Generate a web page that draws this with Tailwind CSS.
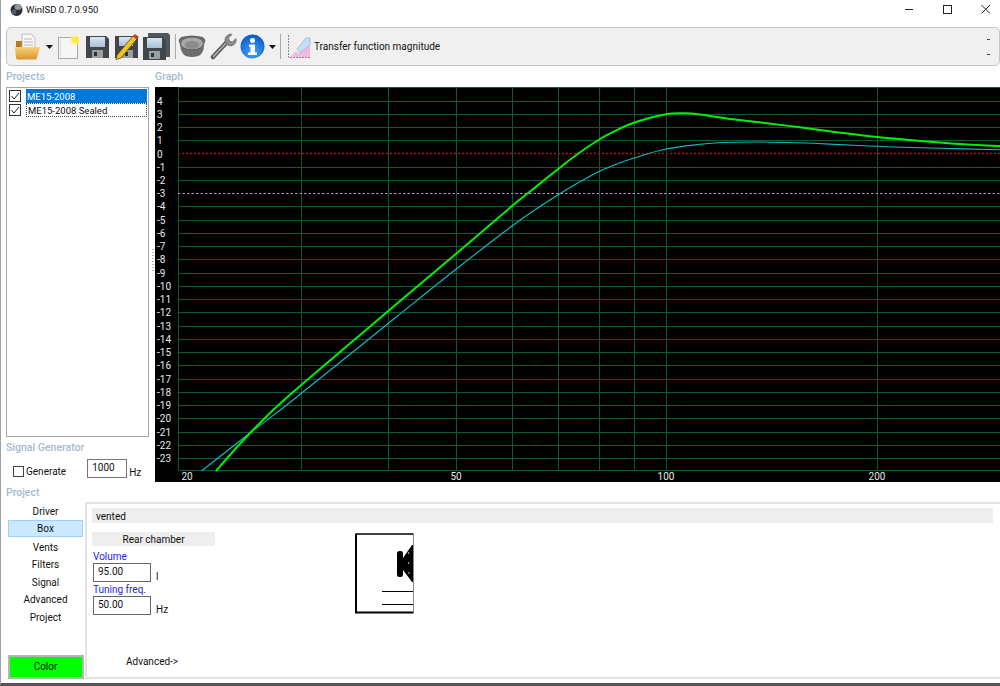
<!DOCTYPE html>
<html lang="en">

<head>
  <meta charset="UTF-8" />
  <title>WinISD 0.7.0.950</title>
  <script src="https://cdn.jsdelivr.net/npm/@tailwindcss/browser@4"></script>
</head>

<body class="bg-white">
  <div class="w-[1000px] h-[686px] overflow-hidden flex flex-col bg-white border-l border-l-gray-400 border-b-[3px] border-b-[#555] font-['Roboto',sans-serif] text-[10px] leading-[14px] text-[#111]">

    <!-- Title bar -->
    <div class="h-[27px] shrink-0 flex items-start">
      <svg class="ml-[8px] mt-[2px]" width="15" height="15" viewBox="0 0 15 15">
        <circle cx="7.5" cy="8" r="6" fill="#2b3036" />
        <ellipse cx="9" cy="5" rx="3.5" ry="3" fill="#8e979e" />
        <circle cx="5" cy="10" r="2.4" fill="#56606a" />
      </svg>
      <span class="ml-[2px] mt-[3px] text-[9.5px]">WinISD 0.7.0.950</span>
      <div class="ml-auto flex items-start">
        <svg width="100" height="20" viewBox="900 0 100 20" fill="none" stroke="#222" stroke-width="1">
          <path d="M905 9.5h8" />
          <rect x="943.5" y="5.5" width="8" height="8" />
          <path d="M981.5 5l8.500 8.500M990 5l-8.500 8.500" />
        </svg>
      </div>
    </div>

    <!-- Toolbar -->
    <div class="h-[39px] shrink-0 ml-[5px] flex items-center bg-[#f0f0f0] border border-[#c4c4c4] rounded-[5px] relative">
      <!-- open -->
      <svg class="ml-[7px]" width="27" height="28" viewBox="0 0 27 28">
        <defs>
          <linearGradient id="fold" x1="0" y1="0" x2="0" y2="1">
            <stop offset="0" stop-color="#f7d27a" />
            <stop offset="1" stop-color="#d9952a" />
          </linearGradient>
        </defs>
        <path d="M2 8h6l2 3h8v14H2z" fill="#b77a20" />
        <path d="M8 1h9l4 4v13H8z" fill="#f7f7f7" stroke="#a8a8a8" stroke-width=".7" />
        <path d="M10 6h8M10 9h9M10 12h9" stroke="#b8b8b8" stroke-width="1" />
        <path d="M1 14h25l-3 11q-.5 1.500-2 1.500H4q-1.500 0-2-1.500z" fill="url(#fold)" />
      </svg>
      <svg class="ml-[5px]" width="7" height="4" viewBox="0 0 7 4"><path d="M0 0h7L3.500 4z" fill="#111" /></svg>
      <!-- new -->
      <svg class="ml-[4px]" width="24" height="26" viewBox="0 0 24 26">
        <rect x="1.500" y="3.500" width="19" height="21" fill="#f6f6f4" stroke="#a9a9a9" />
        <path d="M3.500 5v18" stroke="#dcdcdc" />
        <circle cx="18" cy="6" r="5.500" fill="#fff27a" opacity=".55" />
        <circle cx="18" cy="6" r="3" fill="#ffe93c" />
      </svg>
      <!-- save -->
      <svg class="ml-[4px]" width="25" height="26" viewBox="0 0 25 26">
        <defs>
          <linearGradient id="disk" x1="0" y1="0" x2="0" y2="1">
            <stop offset="0" stop-color="#d9e6f2" />
            <stop offset="1" stop-color="#a9c0d6" />
          </linearGradient>
        </defs>
        <path d="M1 2h20l3 3v19H1z" fill="#3f464c" />
        <rect x="5" y="3" width="15" height="10" fill="url(#disk)" />
        <rect x="7" y="16" width="11" height="8" fill="#9a9fa3" />
        <rect x="9" y="18" width="3" height="4" fill="#2d3236" />
      </svg>
      <!-- save as -->
      <svg class="ml-[3px]" width="26" height="27" viewBox="0 0 26 27">
        <path d="M2 3h21l2 2v20H2z" fill="#3f464c" />
        <rect x="6" y="4" width="14" height="9" fill="url(#disk)" />
        <rect x="9" y="17" width="11" height="8" fill="#9a9fa3" />
        <rect x="12" y="19" width="3" height="4" fill="#2d3236" />
        <path d="M4 22L20 3l4 3L8 25l-5 1.500z" fill="#f2c21f" stroke="#4a3a10" stroke-width=".7" />
        <path d="M20 3l2-2 4 3-2 2z" fill="#d8362b" />
      </svg>
      <!-- save all -->
      <svg class="ml-[4px]" width="27" height="28" viewBox="0 0 27 28">
        <path d="M5 0h20l2 2v22H5z" fill="#50585e" />
        <path d="M0 4h20l3 3v20H0z" fill="#3f464c" />
        <rect x="4" y="5" width="15" height="10" fill="url(#disk)" />
        <rect x="6" y="18" width="11" height="8" fill="#9a9fa3" />
        <rect x="8" y="20" width="3" height="4" fill="#2d3236" />
      </svg>
      <div class="ml-[5px] w-px h-[25px] bg-[#a8a8a8]"></div>
      <!-- speaker -->
      <svg class="ml-[2px]" width="28" height="24" viewBox="0 0 28 24">
        <path d="M3 2q11-3 22 0l2.500 3-1.500 5q0 9-6 11-6 2-12 0-5-2-6-11L.5 5z" fill="#6d6d6d" />
        <ellipse cx="14" cy="8.500" rx="11.500" ry="6.500" fill="#a8a8a8" stroke="#5c5c5c" />
        <ellipse cx="14" cy="10" rx="7.500" ry="4" fill="#8c8c8c" />
      </svg>
      <!-- wrench -->
      <svg class="ml-[4px]" width="27" height="27" viewBox="0 0 27 27">
        <path d="M3 24L17 9" stroke="#5d5d5d" stroke-width="4.500" stroke-linecap="round" />
        <path d="M3.500 23.500L17 9" stroke="#b9b9b9" stroke-width="1.200" stroke-linecap="round" />
        <path d="M15 9q-1-6 5-8l2 .5-3.500 3.500 1 3 3 1L26 5.500q1 6-5 7.500-3 .5-6-4z" fill="#8b8b8b" stroke="#555" stroke-width=".6" />
      </svg>
      <!-- info -->
      <svg class="ml-[3px]" width="25" height="25" viewBox="0 0 25 25">
        <defs>
          <radialGradient id="info" cx=".5" cy=".75" r=".75">
            <stop offset="0" stop-color="#45a6f5" />
            <stop offset="1" stop-color="#0a58c4" />
          </radialGradient>
        </defs>
        <circle cx="12.500" cy="12.500" r="12" fill="url(#info)" />
        <circle cx="12.500" cy="6.500" r="2.500" fill="#fff" />
        <path d="M9 10.500h6v8h2v2.500H8v-2.500h2.500v-5.500H9z" fill="#fff" />
      </svg>
      <svg class="ml-[4px]" width="7" height="4" viewBox="0 0 7 4"><path d="M0 0h7L3.500 4z" fill="#111" /></svg>
      <div class="ml-[4px] w-px h-[25px] bg-[#a8a8a8]"></div>
      <!-- graph -->
      <svg class="ml-[6px]" width="24" height="25" viewBox="0 0 24 25">
        <path d="M2 24L9 17 12 20 20 8h3v15H2z" fill="#f6b7e0" />
        <path d="M10 15l9-11h4v7l-10 8z" fill="#c7ddf5" stroke="#8aa6c8" stroke-width=".6" />
        <path d="M1.500 1v22.500H24" fill="none" stroke="#8a8a8a" stroke-dasharray="2 1" />
      </svg>
      <span class="ml-[3px]">Transfer function magnitude</span>
      <!-- overflow marks -->
      <div class="ml-auto mr-[9px] flex flex-col gap-[14px]">
        <span class="block w-[3px] h-px bg-[#444]"></span>
        <span class="block w-[3px] h-px bg-[#444]"></span>
      </div>
    </div>

    <!-- Projects + graph -->
    <div class="h-[412px] shrink-0 mt-[4px] flex">
      <div class="w-[149px] shrink-0 pl-[5px] flex flex-col">
        <h2 class="h-[17px] text-[10.5px] font-medium text-[#a5bad3]">Projects</h2>
        <div class="h-[350px] w-[143px] border border-[#a5a5a5] pt-[1px] pl-[2px] text-[9.5px]">
          <div class="flex items-center h-[14px]">
            <span class="w-[12px] h-[12px] border border-[#333] flex items-center justify-center">
              <svg width="10" height="10" viewBox="0 0 10 10"><path d="M1.500 5l2.500 3 5-6" fill="none" stroke="#222" /></svg>
            </span>
            <span class="ml-[5px] w-[121px] h-[14px] bg-[#0078d7] text-white pl-[1px] leading-[16px]">ME15-2008</span>
          </div>
          <div class="flex items-center h-[14px]">
            <span class="w-[12px] h-[12px] border border-[#333] flex items-center justify-center">
              <svg width="10" height="10" viewBox="0 0 10 10"><path d="M1.500 5l2.500 3 5-6" fill="none" stroke="#222" /></svg>
            </span>
            <span class="ml-[5px] w-[121px] h-[14px] border border-dotted border-[#444] pl-[1px] leading-[14px]">ME15-2008 Sealed</span>
          </div>
        </div>
        <h2 class="mt-[4px] h-[14px] text-[10.5px] font-medium text-[#a5bad3]">Signal Generator</h2>
        <div class="mt-[4px] h-[19px] flex items-start pl-[7px]">
          <span class="mt-[7px] w-[11px] h-[11px] border border-[#444]"></span>
          <span class="ml-[2px] mt-[6px]">Generate</span>
          <span class="ml-[21px] w-[40px] h-[19px] border border-[#777] pl-[4px] leading-[16px]">1000</span>
          <span class="ml-[2px] mt-[7px]">Hz</span>
        </div>
      </div>

      <!-- splitter grip -->
      <div class="w-[5px] shrink-0 flex flex-col justify-center items-center pb-[30px]">
        <div class="w-[2px] h-[24px] bg-[repeating-linear-gradient(#b5b5b5_0_1px,transparent_1px_3px)]"></div>
      </div>

      <div class="flex-1 flex flex-col">
        <h2 class="h-[17px] text-[10.5px] font-medium text-[#a5bad3]">Graph</h2>
        <svg id="graph" class="bg-black block shrink-0" width="845" height="395" viewBox="155 87 845 395" font-family="Roboto" font-size="10" fill="#e8e8e8"></svg>
      </div>
    </div>

    <!-- Project section -->
    <div class="flex-1 flex flex-col pl-[5px]">
      <h2 class="mt-[4px] h-[15px] text-[10.5px] font-medium text-[#a5bad3]">Project</h2>
      <div class="flex flex-1 mt-[1px] mb-[4px]">
        <div class="w-[79px] shrink-0 flex flex-col items-center leading-[16px]">
          <span class="h-[14px] mt-[2px]">Driver</span>
          <span class="w-[75px] h-[17px] mt-[2px] bg-[#cce8ff] border border-[#99d1ff] text-center">Box</span>
          <span class="h-[14px] mt-[3px]">Vents</span>
          <span class="h-[14px] mt-[3px]">Filters</span>
          <span class="h-[14px] mt-[4px]">Signal</span>
          <span class="h-[14px] mt-[3px]">Advanced</span>
          <span class="h-[14px] mt-[4px]">Project</span>
          <div class="mt-auto w-[76px] h-[24px] border-2 border-[#b5b5b5] bg-[#00ff00] flex items-center justify-center">Color</div>
        </div>
        <div class="flex-1 border-2 border-[#e3e3e3] border-r-0 pl-[5px] pt-[4px]">
          <div class="w-[901px] h-[15px] bg-[#eeeeee] pl-[4px] leading-[17px]">vented</div>
          <div class="flex mt-[9px]">
            <div class="w-[123px]">
              <div class="h-[14px] bg-[#eeeeee] text-center leading-[16px]">Rear chamber</div>
              <div class="h-[14px] mt-[3px] ml-[1px] text-[#2222e8] leading-[16px]">Volume</div>
              <div class="flex items-end ml-[1px]">
                <span class="w-[58px] h-[19px] border border-[#666] pl-[4px] leading-[16px]">95.00</span>
                <span class="ml-[5px] -mb-[2px]">l</span>
              </div>
              <div class="h-[14px] ml-[1px] text-[#2222e8] leading-[16px]">Tuning freq.</div>
              <div class="flex items-end ml-[1px]">
                <span class="w-[58px] h-[19px] border border-[#666] pl-[4px] leading-[16px]">50.00</span>
                <span class="ml-[5px] -mb-[2px]">Hz</span>
              </div>
              <div class="h-[14px] mt-[39px] ml-[34px] leading-[16px]">Advanced-&gt;</div>
            </div>
            <!-- box diagram -->
            <svg class="ml-[140px] mt-[1px]" width="60" height="81" viewBox="355 533 60 81">
              <path d="M356 534h57.500" stroke="#000" stroke-width="1.500" />
              <path d="M356 533.500v79M355 612.500h58.500" stroke="#000" stroke-width="2" />
              <path d="M413.500 534v79" stroke="#888" />
              <path d="M382 591.500h31M382 604.500h31" stroke="#000" stroke-width="1.200" />
              <rect x="397" y="551" width="6" height="26" rx="2.500" fill="#000" />
              <path d="M403 558l9-13h1v37h-1l-9-12z" fill="#000" />
              <circle cx="408.500" cy="553" r=".7" fill="#fff" />
              <circle cx="408.500" cy="563" r=".7" fill="#fff" />
              <circle cx="409" cy="573" r=".7" fill="#fff" />
            </svg>
          </div>
        </div>
      </div>
    </div>
  </div>

  <script>
    const svg = document.getElementById("graph");
    const add = (tag, attrs, text) => {
      const el = document.createElementNS("http://www.w3.org/2000/svg", tag);
      for (const k in attrs) el.setAttribute(k, attrs[k]);
      if (text !== undefined) el.textContent = text;
      svg.appendChild(el);
    };

    const grid = "#0b5a30";
    const yOf = db => 153.5 - db * 13.24;

    // horizontal lines + dB labels
    add("path", { d: "M178 87.5H1000", stroke: grid });
    for (let db = 4; db >= -23; db--) {
      const y = Math.round(yOf(db)) + 0.5;
      if (db !== 0 && db !== -3) add("path", { d: `M178 ${y}H1000`, stroke: grid });
      add("text", { x: 157, y: y + 3.5 }, db);
    }
    add("path", { d: "M178 470.500H1000", stroke: grid });

    // vertical lines, log scale
    [178.5, 301.5, 388.5, 456.5, 512.5, 558.5, 599.5, 634.5, 666.5, 877.5].forEach(x => {
      add("path", { d: `M${x} 87V471`, stroke: grid });
    });

    // 0 dB and -3 dB markers
    add("path", { d: "M178 153.500H1000", stroke: "#b01010", "stroke-width": 1.4, "stroke-dasharray": "2 2" });
    add("path", { d: "M178 193.500H1000", stroke: "#c98ac9", "stroke-dasharray": "2.500 2" });

    [[20, 187], [50, 456], [100, 666], [200, 877]].forEach(([hz, x]) => {
      add("text", { x, y: 479.5, "text-anchor": "middle" }, hz);
    });

    // catmull-rom through the read-off points
    const smooth = pts => {
      let d = `M${pts[0]}`;
      for (let i = 0; i < pts.length - 1; i++) {
        const p0 = pts[i - 1] || pts[i], p1 = pts[i], p2 = pts[i + 1], p3 = pts[i + 2] || p2;
        d += `C${p1[0] + (p2[0] - p0[0]) / 6} ${p1[1] + (p2[1] - p0[1]) / 6} ${p2[0] - (p3[0] - p1[0]) / 6} ${p2[1] - (p3[1] - p1[1]) / 6} ${p2[0]} ${p2[1]}`;
      }
      return d;
    };

    const sealed = [[201.5, 471], [250, 433], [293, 400], [395, 318], [455, 270], [512, 226], [540, 206.5], [565, 190.5], [583, 180], [600, 171], [617, 164], [634, 158], [666, 149], [700, 144.3], [722, 142.5], [755, 142], [787, 142.5], [813, 143.3], [853, 145.3], [893, 147], [940, 148.2], [1000, 149.7]];
    const vented = [[216, 471], [238, 446], [260, 423], [283, 401], [340, 352], [400, 301], [457, 253], [512, 206], [532, 190], [555, 171.5], [577, 154.5], [600, 139], [617, 130], [634, 122.7], [666, 114.3], [685, 113.3], [700, 114.5], [733, 119.3], [767, 123.3], [800, 127.3], [833, 131.7], [877, 137], [933, 142], [967, 144.5], [1000, 146]];

    add("path", { d: smooth(sealed), fill: "none", stroke: "#10bcc4", "stroke-width": 1.1 });
    add("path", { d: smooth(vented), fill: "none", stroke: "#00f000", "stroke-width": 2 });
  </script>
</body>

</html>
